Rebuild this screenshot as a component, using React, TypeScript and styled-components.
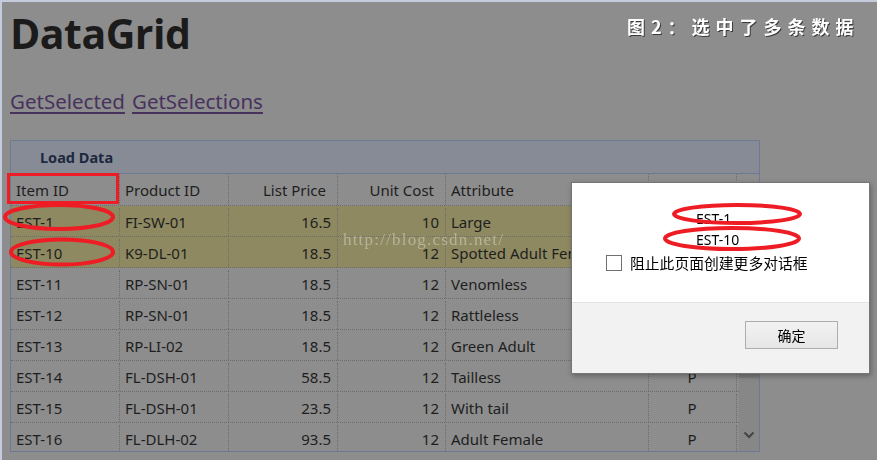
import React from "react";
import styled, { createGlobalStyle } from "styled-components";

const Global = createGlobalStyle`
  html, body { margin: 0; padding: 0; background: #8d8d8d; overflow: hidden; }
  #root { width: 877px; height: 460px; }
`;

const Frame = styled.div`
  box-sizing: border-box;
  width: 877px;
  height: 460px;
  border-top: 2px solid #c3cbdd;
  border-left: 2px solid #c3cbdd;
  background: #8d8d8d;
  padding: 0 0 0 8px;
  overflow: hidden;
  font-family: "Noto Sans", "Open Sans", sans-serif;
  color: #1e1e1e;
`;

const Heading = styled.h1`
  margin: 6px 0 0 0;
  font-family: "Open Sans", "Noto Sans", sans-serif;
  font-weight: 700;
  font-size: 41px;
  line-height: 50px;
  letter-spacing: -0.5px;
  color: #1b1b1b;
`;

const Links = styled.div`
  margin-top: 31px;
  display: flex;
  gap: 7px;
  font-size: 20.5px;
  line-height: 24px;
`;

const Link = styled.a`
  color: #47325e;
  text-decoration: underline;
  text-underline-offset: 3px;
  cursor: pointer;
`;

const Panel = styled.div`
  margin-top: 27px;
  width: 750px;
  border: 1px solid #6d7a93;
  box-sizing: border-box;
`;

const PanelHeader = styled.div`
  height: 32px;
  border-bottom: 1px solid #6d7a93;
  background: #878b95;
  display: flex;
  align-items: center;
  padding-left: 29px;
  font-weight: 700;
  font-size: 14.5px;
  color: #1d2840;
`;

const COLS = "109px 109px 109px 108px 203px 88px";

const HeaderRow = styled.div`
  display: grid;
  grid-template-columns: ${COLS} 1fr;
  height: 32px;
  border-bottom: 1px dotted #6c6c6c;
  box-sizing: border-box;
`;

const HeadCell = styled.div<{ $align?: string }>`
  display: flex;
  align-items: center;
  justify-content: ${(p) => p.$align || "flex-start"};
  padding: 0 ${(p) => (p.$align === "flex-end" ? "11px" : "5px")} 0 5px;
  border-right: 1px dotted #6c6c6c;
  font-size: 15px;
  white-space: nowrap;
  overflow: hidden;
`;

const Body = styled.div`
  display: flex;
  height: 245px;
  overflow: hidden;
`;

const Rows = styled.div`
  width: 728px;
`;

const Row = styled.div<{ $selected?: boolean }>`
  display: grid;
  grid-template-columns: ${COLS} 1fr;
  height: 31px;
  box-sizing: border-box;
  padding-top: 2px;
  border-bottom: 1px dotted #6c6c6c;
  background: ${(p) => (p.$selected ? "#8e8961" : "transparent")};
`;

const Cell = styled.div<{ $align?: string }>`
  display: flex;
  align-items: center;
  justify-content: ${(p) => p.$align || "flex-start"};
  padding: 0 6px 0 5px;
  border-right: 1px dotted #6c6c6c;
  font-size: 15px;
  white-space: nowrap;
  overflow: hidden;
`;

const Blank = styled.div``;

const Scrollbar = styled.div`
  width: 20px;
  background: #878787;
  display: flex;
  flex-direction: column;
`;

const Thumb = styled.div`
  margin-top: 17px;
  height: 155px;
  background: #7c7c7c;
`;

const Track = styled.div`
  flex: 1;
`;

const ArrowBox = styled.div`
  height: 20px;
  display: flex;
  align-items: flex-start;
  justify-content: center;
`;

const Watermark = styled.div`
  position: fixed;
  left: 343px;
  top: 230px;
  font-family: "Liberation Serif", serif;
  font-size: 17px;
  letter-spacing: 1.2px;
  color: rgba(255, 255, 255, 0.35);
  pointer-events: none;
`;

const Caption = styled.div`
  position: fixed;
  left: 627px;
  top: 13px;
  font-family: "Noto Sans CJK SC", sans-serif;
  font-weight: 700;
  font-size: 18px;
  line-height: 26px;
  letter-spacing: 6px;
  color: #ffffff;
  text-shadow: 1px 1px 0 #3a3a3a;
  white-space: nowrap;
`;

const Dialog = styled.div`
  position: fixed;
  left: 571px;
  top: 182px;
  width: 299px;
  height: 192px;
  box-sizing: border-box;
  border: 1px solid #767676;
  background: #ffffff;
  box-shadow: 1px 2px 5px rgba(0, 0, 0, 0.3);
  display: flex;
  flex-direction: column;
  font-family: "Noto Sans", "Noto Sans CJK SC", sans-serif;
  color: #000;
`;

const DialogBody = styled.div`
  height: 119px;
  box-sizing: border-box;
  padding: 25px 0 0 0;
`;

const Message = styled.div`
  margin-left: 124px;
  font-size: 14px;
  line-height: 21px;
`;

const CheckRow = styled.label`
  margin: 2px 0 0 34px;
  display: flex;
  align-items: center;
  gap: 8px;
  height: 21px;
  font-family: "Noto Sans CJK SC", sans-serif;
  font-size: 14.8px;
`;

const Box = styled.span`
  width: 14px;
  height: 14px;
  border: 1px solid #707070;
  background: #fff;
`;

const Footer = styled.div`
  flex: 1;
  background: #f2f2f2;
  border-top: 1px solid #e3e3e3;
  display: flex;
  justify-content: flex-end;
  align-items: flex-start;
  padding: 18px 31px 0 0;
`;

const Button = styled.button`
  width: 93px;
  height: 28px;
  border: 1px solid #adadad;
  background: linear-gradient(#f2f2f2, #e6e6e6);
  font-family: "Noto Sans CJK SC", sans-serif;
  font-size: 14px;
  color: #000;
  padding: 0;
`;

const Marks = styled.svg`
  position: fixed;
  left: 0;
  top: 0;
  pointer-events: none;
`;

type R = [string, string, string, string, string, string, boolean];
const data: R[] = [
  ["EST-1", "FI-SW-01", "16.5", "10", "Large", "P", true],
  ["EST-10", "K9-DL-01", "18.5", "12", "Spotted Adult Female", "P", true],
  ["EST-11", "RP-SN-01", "18.5", "12", "Venomless", "P", false],
  ["EST-12", "RP-SN-01", "18.5", "12", "Rattleless", "P", false],
  ["EST-13", "RP-LI-02", "18.5", "12", "Green Adult", "P", false],
  ["EST-14", "FL-DSH-01", "58.5", "12", "Tailless", "P", false],
  ["EST-15", "FL-DSH-01", "23.5", "12", "With tail", "P", false],
  ["EST-16", "FL-DLH-02", "93.5", "12", "Adult Female", "P", false],
];

export default function App() {
  return (
    <>
      <Global />
      <Frame>
        <Heading>DataGrid</Heading>
        <Links>
          <Link>GetSelected</Link>
          <Link>GetSelections</Link>
        </Links>
        <Panel>
          <PanelHeader>Load Data</PanelHeader>
          <HeaderRow>
            <HeadCell>Item ID</HeadCell>
            <HeadCell>Product ID</HeadCell>
            <HeadCell $align="flex-end">List Price</HeadCell>
            <HeadCell $align="flex-end">Unit Cost</HeadCell>
            <HeadCell>Attribute</HeadCell>
            <HeadCell $align="center">Status</HeadCell>
            <Blank />
          </HeaderRow>
          <Body>
            <Rows>
              {data.map((r) => (
                <Row key={r[0]} $selected={r[6]}>
                  <Cell>{r[0]}</Cell>
                  <Cell>{r[1]}</Cell>
                  <Cell $align="flex-end">{r[2]}</Cell>
                  <Cell $align="flex-end">{r[3]}</Cell>
                  <Cell>{r[4]}</Cell>
                  <Cell $align="center">{r[5]}</Cell>
                  <Blank />
                </Row>
              ))}
            </Rows>
            <Scrollbar>
              <Thumb />
              <Track />
              <ArrowBox>
                <svg width="12" height="8" viewBox="0 0 12 8">
                  <path d="M1.5 1.5 L6 6 L10.5 1.5" fill="none" stroke="#444" strokeWidth="2" />
                </svg>
              </ArrowBox>
            </Scrollbar>
          </Body>
        </Panel>
      </Frame>
      <Watermark>http://blog.csdn.net/</Watermark>
      <Caption>图2：选中了多条数据</Caption>
      <Dialog>
        <DialogBody>
          <Message>
            EST-1
            <br />
            EST-10
          </Message>
          <CheckRow>
            <Box />
            阻止此页面创建更多对话框
          </CheckRow>
        </DialogBody>
        <Footer>
          <Button>确定</Button>
        </Footer>
      </Dialog>
      <Marks width="877" height="460" viewBox="0 0 877 460">
        <g fill="none" stroke="#ee1c24">
          <rect x="8.5" y="174.5" width="109" height="28" strokeWidth="3" />
          <ellipse cx="59" cy="217" rx="54" ry="12" strokeWidth="4" />
          <ellipse cx="62" cy="252" rx="51" ry="12.5" strokeWidth="4" />
          <ellipse cx="737" cy="214" rx="63" ry="9" strokeWidth="4" />
          <ellipse cx="732" cy="238.5" rx="67" ry="10.5" strokeWidth="4" />
        </g>
      </Marks>
    </>
  );
}
